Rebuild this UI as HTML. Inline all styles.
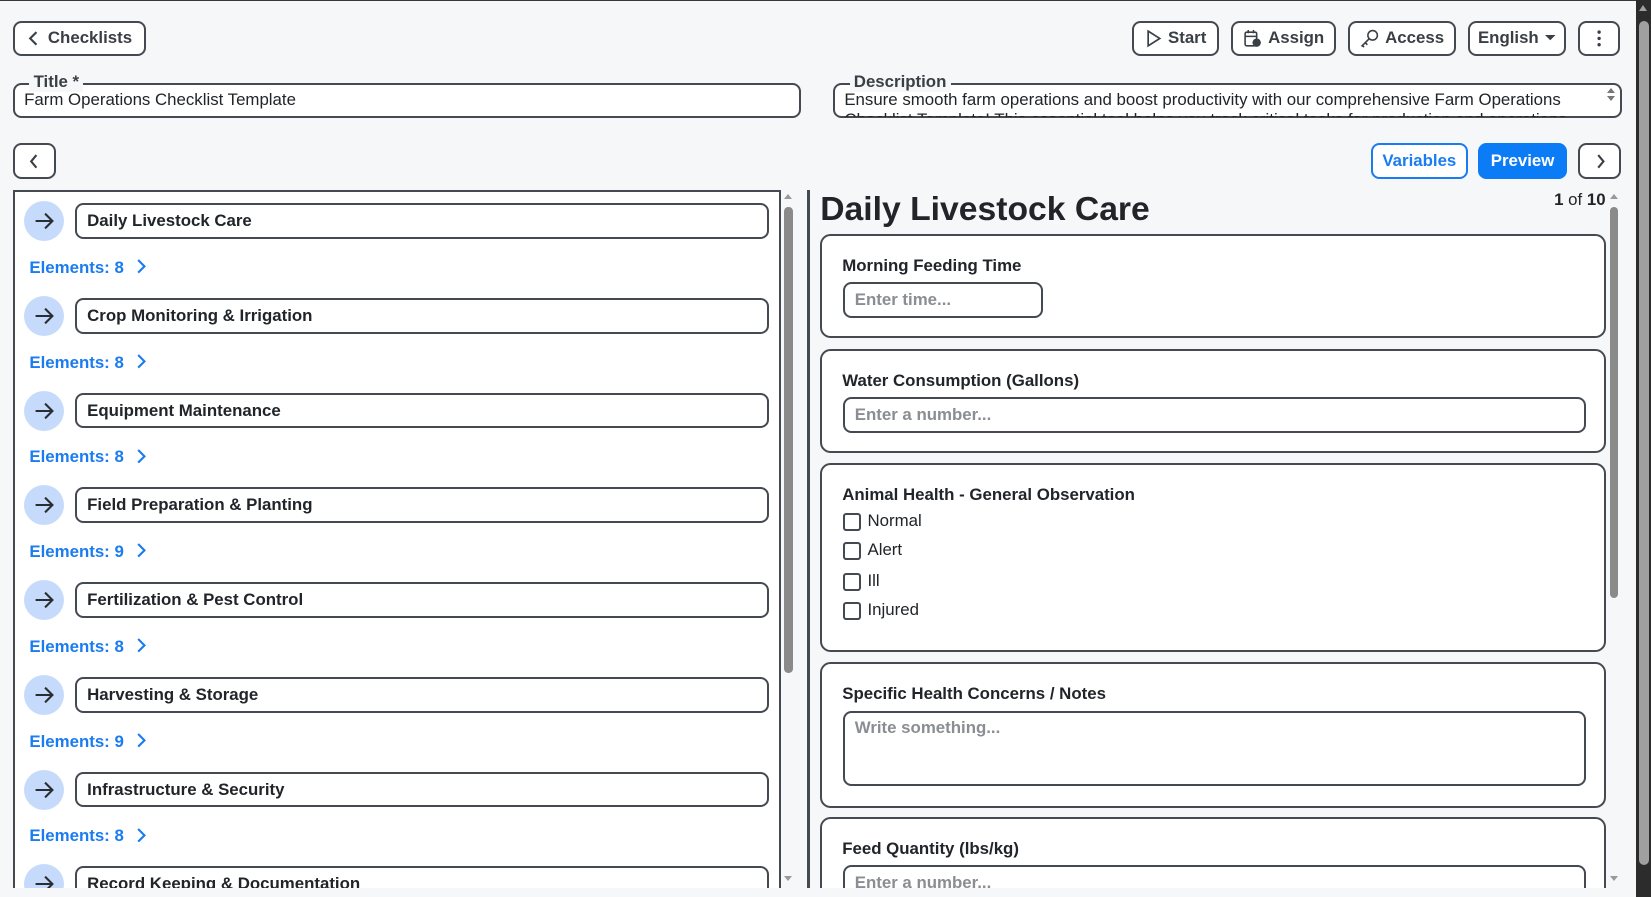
<!DOCTYPE html>
<html><head><meta charset="utf-8">
<style>
html{margin:0;padding:0;width:1651px;height:897px;overflow:hidden;}
body{margin:0;padding:0;width:1568px;height:852px;zoom:1.05293;background:#f6f7f9;position:relative;overflow:hidden;font-family:"Liberation Sans",Arial,sans-serif;color:#212529;}
.a{position:absolute;box-sizing:border-box;}
.btn{position:absolute;box-sizing:border-box;border:2px solid #454a52;border-radius:8px;background:#fff;height:33px;top:20px;font-weight:bold;font-size:16px;color:#3a3f45;display:flex;align-items:center;justify-content:center;gap:6px;}
.fs{position:absolute;box-sizing:border-box;border:2px solid #454a52;border-radius:8px;background:#fff;}
.lg{position:absolute;top:-12px;background:#f6f7f9;padding:0 4px;font-size:16px;font-weight:bold;color:#3a3f45;line-height:18px;}
.item{position:absolute;left:-1px;width:728px;height:90px;border-bottom:2px solid #454a52;background:#fff;}
.circ{position:absolute;left:10px;top:10px;width:38px;height:38px;border-radius:50%;background:#c6dbfb;}
.name{position:absolute;left:58px;top:12px;width:659px;height:34px;box-sizing:border-box;border:2px solid #454a52;border-radius:8px;font-weight:bold;font-size:16px;line-height:30px;padding-left:10px;color:#212529;}
.el{position:absolute;left:15px;top:64px;color:#1a7cf0;font-weight:bold;font-size:16px;}
.card{position:absolute;left:0;width:746px;box-sizing:border-box;border:2px solid #454a52;border-radius:10px;background:#fff;}
.lbl{position:absolute;left:19px;font-weight:bold;font-size:16px;color:#212529;}
.inp{position:absolute;left:20px;box-sizing:border-box;border:2px solid #454a52;border-radius:8px;height:34px;font-weight:bold;font-size:16px;color:#8a8d91;padding-left:9px;line-height:30px;}
.cb{position:absolute;left:20px;width:17px;height:17px;box-sizing:border-box;border:2px solid #454a52;border-radius:3px;}
.cbl{position:absolute;left:43px;font-size:16px;}
</style></head><body>
<div class="a" style="left:0;top:0;width:1555px;height:1px;background:#3a3a3a"></div>
<div class="a" style="left:1554px;top:0;width:14px;height:852px;background:#2c2c2c"></div>
<div class="a" style="left:1557px;top:20px;width:9px;height:802px;background:#a0a0a0;border-radius:5px"></div>
<div class="a" style="left:1557px;top:5px;width:0;height:0;border-left:4px solid transparent;border-right:4px solid transparent;border-bottom:6px solid #a0a0a0"></div>

<div class="btn" style="left:12px;width:127px"><svg width="14" height="16" viewBox="0 0 14 16"><path d="M9 2 L3 8 L9 14" fill="none" stroke="#3a3f45" stroke-width="2"/></svg>Checklists</div>

<div class="btn" style="left:1075px;width:83px"><svg width="16" height="18" viewBox="0 0 16 18"><path d="M3 2 L14 9 L3 16 Z" fill="none" stroke="#3a3f45" stroke-width="1.6"/></svg>Start</div>
<div class="btn" style="left:1169px;width:100px"><svg width="18" height="18" viewBox="0 0 18 18"><rect x="2" y="3" width="11" height="13" rx="1.5" fill="none" stroke="#3a3f45" stroke-width="1.5"/><path d="M2 7H13M5 1V4M10 1V4" stroke="#3a3f45" stroke-width="1.5"/><circle cx="13" cy="13" r="4" fill="#3a3f45"/></svg>Assign</div>
<div class="btn" style="left:1280px;width:103px"><svg width="18" height="18" viewBox="0 0 18 18"><circle cx="12" cy="6" r="4.5" fill="none" stroke="#3a3f45" stroke-width="1.5"/><path d="M9 9 L2 16 L4 17 M5 13 L7 15" fill="none" stroke="#3a3f45" stroke-width="1.5"/></svg>Access</div>
<div class="btn" style="left:1394px;width:93px">English<svg width="10" height="6" viewBox="0 0 10 6"><path d="M0 0H10L5 5Z" fill="#3a3f45"/></svg></div>
<div class="btn" style="left:1499px;width:40px"><svg width="4" height="16" viewBox="0 0 4 16"><circle cx="2" cy="2" r="1.6" fill="#3a3f45"/><circle cx="2" cy="8" r="1.6" fill="#3a3f45"/><circle cx="2" cy="14" r="1.6" fill="#3a3f45"/></svg></div>

<div class="fs" style="left:12px;top:79px;width:749px;height:33px"><span class="lg" style="left:14px">Title *</span><span class="a" style="left:9px;top:5px;font-size:16px;white-space:nowrap">Farm Operations Checklist Template</span></div>
<div class="fs" style="left:791px;top:79px;width:749px;height:33px;overflow:visible"><span class="lg" style="left:14px">Description</span><div class="a" style="left:9px;top:5px;width:720px;height:25px;overflow:hidden;font-size:16px;line-height:19px">Ensure smooth farm operations and boost productivity with our comprehensive Farm Operations Checklist Template! This essential tool helps you track critical tasks for production and operations.</div>
<div class="a" style="right:4px;top:3px;width:0;height:0;border-left:4px solid transparent;border-right:4px solid transparent;border-bottom:5px solid #777"></div>
<div class="a" style="right:4px;top:10px;width:0;height:0;border-left:4px solid transparent;border-right:4px solid transparent;border-top:5px solid #777"></div></div>

<div class="btn" style="left:12px;top:136px;width:41px;height:34px"><svg width="12" height="16" viewBox="0 0 12 16"><path d="M8 2 L3 8 L8 14" fill="none" stroke="#3a3f45" stroke-width="2"/></svg></div>
<div class="btn" style="left:1302px;top:136px;width:92px;height:34px;border-color:#1a7cf0;color:#1a7cf0">Variables</div>
<div class="btn" style="left:1404px;top:136px;width:84px;height:34px;border-color:#0b7cf5;background:#0b7cf5;color:#fff">Preview</div>
<div class="btn" style="left:1499px;top:136px;width:41px;height:34px"><svg width="12" height="16" viewBox="0 0 12 16"><path d="M4 2 L9 8 L4 14" fill="none" stroke="#3a3f45" stroke-width="2"/></svg></div>

<div class="a" style="left:12px;top:180px;width:730px;height:663px;border:2px solid #454a52;border-bottom:none;overflow:hidden;background:#fff">
<div id="list"></div>
</div>
<div class="a" style="left:742px;top:180px;width:14px;height:663px;background:#f6f7f9"></div>
<div class="a" style="left:745px;top:184px;width:0;height:0;border-left:4px solid transparent;border-right:4px solid transparent;border-bottom:5px solid #999"></div>
<div class="a" style="left:745px;top:197px;width:8px;height:442px;background:#8a8a8a;border-radius:4px"></div>
<div class="a" style="left:745px;top:832px;width:0;height:0;border-left:4px solid transparent;border-right:4px solid transparent;border-top:5px solid #999"></div>
<div class="a" style="left:766px;top:180px;width:3px;height:663px;background:#454a52"></div>

<div class="a" style="left:779px;top:181px;font-size:32px;font-weight:bold;color:#212529">Daily Livestock Care</div>
<div class="a" style="left:1476px;top:180px;font-size:16px"><b>1</b> of <b>10</b></div>
<div class="a" style="left:779px;top:222px;width:748px;height:621px;overflow:hidden">
 <div class="card" style="top:0;height:99px"><div class="lbl" style="top:19px">Morning Feeding Time</div><div class="inp" style="top:44px;width:190px">Enter time...</div></div>
 <div class="card" style="top:109px;height:99px"><div class="lbl" style="top:19px">Water Consumption (Gallons)</div><div class="inp" style="top:44px;width:705px">Enter a number...</div></div>
 <div class="card" style="top:218px;height:179px"><div class="lbl" style="top:19px">Animal Health - General Observation</div>
  <div class="cb" style="top:45px"></div><div class="cbl" style="top:43px">Normal</div>
  <div class="cb" style="top:73px"></div><div class="cbl" style="top:71px">Alert</div>
  <div class="cb" style="top:102px"></div><div class="cbl" style="top:100px">Ill</div>
  <div class="cb" style="top:130px"></div><div class="cbl" style="top:128px">Injured</div></div>
 <div class="card" style="top:407px;height:138px"><div class="lbl" style="top:19px">Specific Health Concerns / Notes</div><div class="inp" style="top:44px;width:705px;height:72px;line-height:24px;padding-top:2px">Write something...</div></div>
 <div class="card" style="top:554px;height:120px"><div class="lbl" style="top:19px">Feed Quantity (lbs/kg)</div><div class="inp" style="top:44px;width:705px">Enter a number...</div></div>
</div>
<div class="a" style="left:1527px;top:180px;width:12px;height:663px;background:#f6f7f9"></div>
<div class="a" style="left:1529px;top:184px;width:0;height:0;border-left:4px solid transparent;border-right:4px solid transparent;border-bottom:5px solid #999"></div>
<div class="a" style="left:1529px;top:197px;width:8px;height:371px;background:#8a8a8a;border-radius:4px"></div>
<div class="a" style="left:1529px;top:832px;width:0;height:0;border-left:4px solid transparent;border-right:4px solid transparent;border-top:5px solid #999"></div>

<script>
var items=[["Daily Livestock Care",8],["Crop Monitoring & Irrigation",8],["Equipment Maintenance",8],["Field Preparation & Planting",9],["Fertilization & Pest Control",8],["Harvesting & Storage",9],["Infrastructure & Security",8],["Record Keeping & Documentation",8]];
var h="";
items.forEach(function(it,i){
h+='<div class="item" style="top:'+(i*90-1)+'px"><div class="circ"><svg width="38" height="38" viewBox="0 0 38 38"><path d="M11 19H27M20 12L27 19L20 26" fill="none" stroke="#2a2d31" stroke-width="2"/></svg></div><div class="name">'+it[0].replace("&","&amp;")+'</div><div class="el">Elements: '+it[1]+' <svg width="12" height="14" viewBox="0 0 12 14" style="margin-left:6px;vertical-align:-1px"><path d="M3 1L9 7L3 13" fill="none" stroke="#1a7cf0" stroke-width="2"/></svg></div></div>';
});
document.getElementById("list").innerHTML=h;
</script>
</body></html>
